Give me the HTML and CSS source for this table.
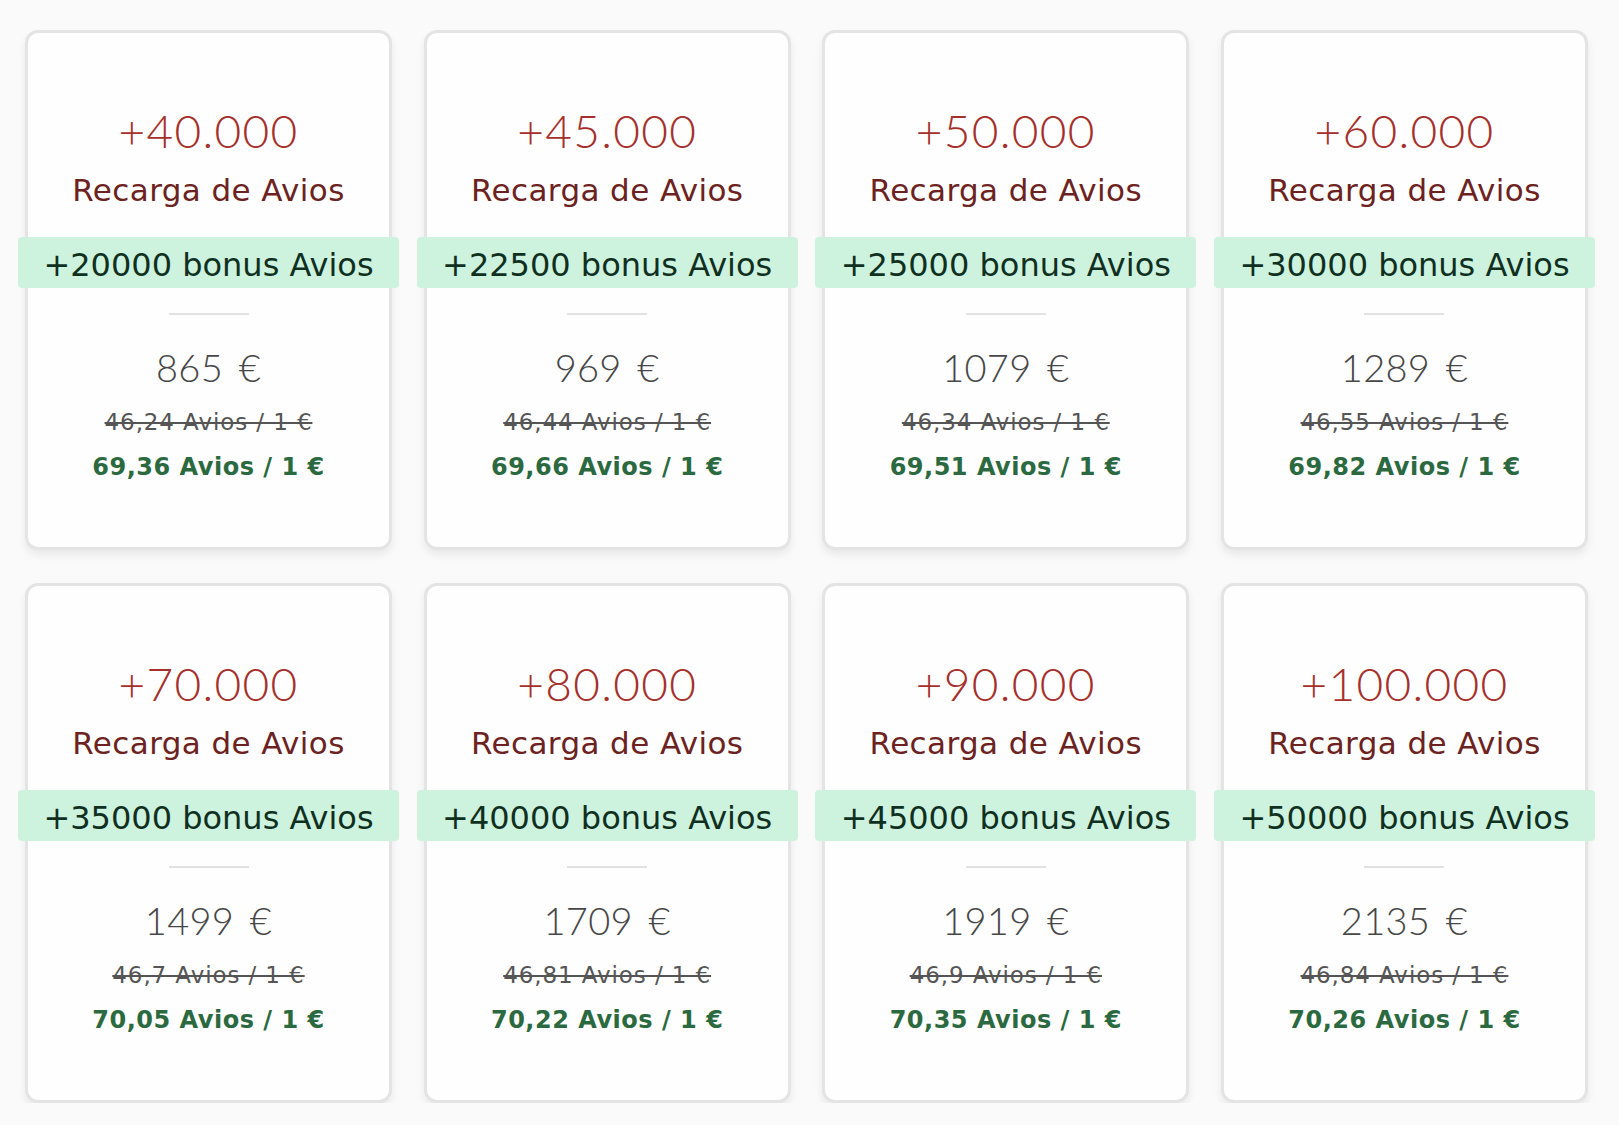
FILE: index.html
```html
<!DOCTYPE html>
<html lang="es">
<head>
<meta charset="utf-8">
<title>Recarga de Avios</title>
<link rel="stylesheet" href="styles.css">
</head>
<body>
<main class="grid">
  <article class="card">
    <div class="amount">+40.000</div>
    <div class="label">Recarga de Avios</div>
    <div class="bonus">+20000 bonus Avios</div>
    <hr class="divider">
    <div class="price">865 €</div>
    <div class="old-rate">46,24 Avios / 1 €</div>
    <div class="new-rate">69,36 Avios / 1 €</div>
  </article>
  <article class="card">
    <div class="amount">+45.000</div>
    <div class="label">Recarga de Avios</div>
    <div class="bonus">+22500 bonus Avios</div>
    <hr class="divider">
    <div class="price">969 €</div>
    <div class="old-rate">46,44 Avios / 1 €</div>
    <div class="new-rate">69,66 Avios / 1 €</div>
  </article>
  <article class="card">
    <div class="amount">+50.000</div>
    <div class="label">Recarga de Avios</div>
    <div class="bonus">+25000 bonus Avios</div>
    <hr class="divider">
    <div class="price">1079 €</div>
    <div class="old-rate">46,34 Avios / 1 €</div>
    <div class="new-rate">69,51 Avios / 1 €</div>
  </article>
  <article class="card">
    <div class="amount">+60.000</div>
    <div class="label">Recarga de Avios</div>
    <div class="bonus">+30000 bonus Avios</div>
    <hr class="divider">
    <div class="price">1289 €</div>
    <div class="old-rate">46,55 Avios / 1 €</div>
    <div class="new-rate">69,82 Avios / 1 €</div>
  </article>
  <article class="card">
    <div class="amount">+70.000</div>
    <div class="label">Recarga de Avios</div>
    <div class="bonus">+35000 bonus Avios</div>
    <hr class="divider">
    <div class="price">1499 €</div>
    <div class="old-rate">46,7 Avios / 1 €</div>
    <div class="new-rate">70,05 Avios / 1 €</div>
  </article>
  <article class="card">
    <div class="amount">+80.000</div>
    <div class="label">Recarga de Avios</div>
    <div class="bonus">+40000 bonus Avios</div>
    <hr class="divider">
    <div class="price">1709 €</div>
    <div class="old-rate">46,81 Avios / 1 €</div>
    <div class="new-rate">70,22 Avios / 1 €</div>
  </article>
  <article class="card">
    <div class="amount">+90.000</div>
    <div class="label">Recarga de Avios</div>
    <div class="bonus">+45000 bonus Avios</div>
    <hr class="divider">
    <div class="price">1919 €</div>
    <div class="old-rate">46,9 Avios / 1 €</div>
    <div class="new-rate">70,35 Avios / 1 €</div>
  </article>
  <article class="card">
    <div class="amount">+100.000</div>
    <div class="label">Recarga de Avios</div>
    <div class="bonus">+50000 bonus Avios</div>
    <hr class="divider">
    <div class="price">2135 €</div>
    <div class="old-rate">46,84 Avios / 1 €</div>
    <div class="new-rate">70,26 Avios / 1 €</div>
  </article>
</main>
</body>
</html>
```

FILE: styles.css
```css
html, body {
  margin: 0;
  padding: 0;
  background: #fafafa;
}

body {
  font-family: "DejaVu Sans", Verdana, sans-serif;
}

.grid {
  display: grid;
  grid-template-columns: repeat(4, 367px);
  column-gap: 31.67px;
  row-gap: 33px;
  padding: 30px 0 0 25px;
}

.card {
  box-sizing: border-box;
  height: 520px;
  background: #fefefe;
  border: 3px solid #e4e4e4;
  border-radius: 13px;
  box-shadow: 0 5px 8px rgba(0, 0, 0, 0.07);
  padding-top: 75px;
  text-align: center;
  display: flex;
  flex-direction: column;
  align-items: center;
}

.amount {
  font-family: Lato, "Open Sans", sans-serif;
  font-weight: 300;
  font-size: 46px;
  line-height: 46px;
  letter-spacing: 1.3px;
  color: #a5302b;
}

.label {
  margin-top: 18px;
  font-size: 31px;
  line-height: 37px;
  letter-spacing: 0.4px;
  color: #6c2220;
}

.bonus {
  align-self: stretch;
  margin: 28px -10px 0;
  height: 51px;
  box-sizing: border-box;
  padding-top: 5px;
  border-radius: 4px;
  background: #cdf2de;
  color: #10301f;
  font-size: 32px;
  line-height: 46px;
}

.divider {
  width: 80px;
  height: 2px;
  margin: 25px 0 0;
  border: 0;
  background: #e2e2e2;
}

.price {
  margin-top: 33px;
  font-family: Lato, "Open Sans", sans-serif;
  font-weight: 300;
  font-size: 38px;
  line-height: 38px;
  letter-spacing: 0.3px;
  word-spacing: 5px;
  color: #474747;
}

.old-rate {
  margin-top: 22px;
  font-size: 23px;
  line-height: 28px;
  letter-spacing: 0.9px;
  color: #555555;
  text-decoration: line-through;
}

.new-rate {
  margin-top: 17px;
  font-size: 24px;
  line-height: 29px;
  letter-spacing: 0.5px;
  font-weight: bold;
  color: #2b6a40;
}
```
